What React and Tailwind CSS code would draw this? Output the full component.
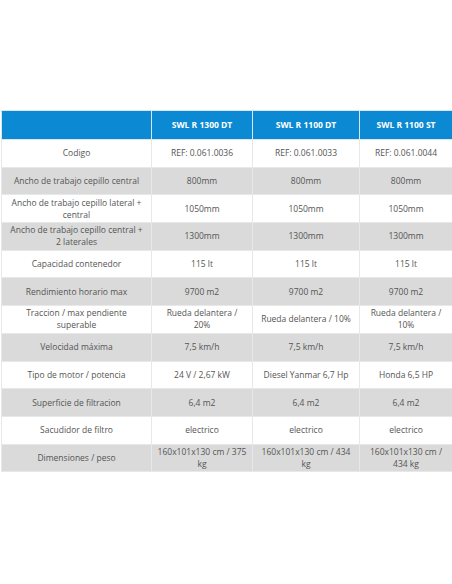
import React from 'react';

const models = ['SWL R 1300 DT', 'SWL R 1100 DT', 'SWL R 1100 ST'];

// \n marks where the source table wraps the cell text
const rows = [
    ['Codigo', 'REF: 0.061.0036', 'REF: 0.061.0033', 'REF: 0.061.0044'],
    ['Ancho de trabajo cepillo central', '800mm', '800mm', '800mm'],
    ['Ancho de trabajo cepillo lateral +\ncentral', '1050mm', '1050mm', '1050mm'],
    ['Ancho de trabajo cepillo central +\n2 laterales', '1300mm', '1300mm', '1300mm'],
    ['Capacidad contenedor', '115 lt', '115 lt', '115 lt'],
    ['Rendimiento horario max', '9700 m2', '9700 m2', '9700 m2'],
    ['Traccion / max pendiente\nsuperable', 'Rueda delantera /\n20%', 'Rueda delantera / 10%', 'Rueda delantera /\n10%'],
    ['Velocidad máxima', '7,5 km/h', '7,5 km/h', '7,5 km/h'],
    ['Tipo de motor / potencia', '24 V / 2,67 kW', 'Diesel Yanmar 6,7 Hp', 'Honda 6,5 HP'],
    ['Superficie de filtracion', '6,4 m2', '6,4 m2', '6,4 m2'],
    ['Sacudidor de filtro', 'electrico', 'electrico', 'electrico'],
    ['Dimensiones / peso', '160x101x130 cm / 375\nkg', '160x101x130 cm / 434\nkg', '160x101x130 cm /\n434 kg'],
];

export default function App() {
    return (
        <div className="w-[452px] h-[584px] bg-white pt-[110px] pl-px" style={{ fontFamily: '"Open Sans", sans-serif' }}>
            <table className="w-[451px] border-collapse table-fixed text-[8.5px] leading-[12px] text-[#555]">
                <colgroup>
                    <col className="w-[150px]" />
                    <col className="w-[101px]" />
                    <col className="w-[107px]" />
                    <col className="w-[93px]" />
                </colgroup>
                <thead>
                    <tr className="h-[29px] bg-[#0b8ad3] text-white font-bold">
                        <th className="border border-[#d6e6f2]" />
                        {models.map((m) => (
                            <th key={m} className="border border-[#d6e6f2] px-1 text-center">{m}</th>
                        ))}
                    </tr>
                </thead>
                <tbody>
                    {rows.map((row, i) => (
                        <tr key={i} className={`h-[27.7px] ${i % 2 === 1 ? 'bg-[#dadada]' : 'bg-white'}`}>
                            {row.map((cell, j) => (
                                <td key={j} className="border border-[#e8e8e8] px-[3px] text-center align-middle whitespace-pre-line">{cell}</td>
                            ))}
                        </tr>
                    ))}
                </tbody>
            </table>
        </div>
    );
}
